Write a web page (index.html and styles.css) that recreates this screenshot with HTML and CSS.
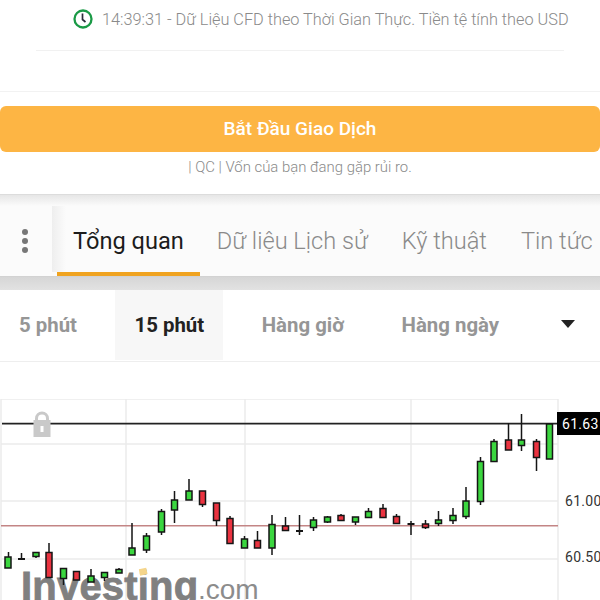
FILE: index.html
```html
<!DOCTYPE html>
<html>
<head>
  <meta charset="utf-8">
  <title>Investing - Tổng quan</title>
  <link rel="stylesheet" href="styles.css">
</head>
<body>
  <div class="status">
    <div class="status-line">
      <svg class="clock" width="20" height="20" viewBox="0 0 20 20">
        <circle cx="10" cy="10" r="8.5" fill="none" stroke="#1a9a46" stroke-width="2.3"/>
        <path d="M9.5 4.5V10.5L12.5 13" fill="none" stroke="#2b2b3a" stroke-width="1.7"/>
      </svg>
      <span class="status-text">14:39:31 - Dữ Liệu CFD theo Thời Gian Thực. Tiền tệ tính theo USD</span>
    </div>
    <div class="status-rule"></div>
  </div>

  <div class="promo">
    <a class="trade-btn">Bắt Đầu Giao Dịch</a>
    <p class="risk">| QC | Vốn của bạn đang gặp rủi ro.</p>
  </div>

  <div class="tabs-gap"></div>

  <div class="tabs">
    <div class="tabs-menu">
      <span class="dot"></span>
      <span class="dot"></span>
      <span class="dot"></span>
    </div>
    <div class="tab tab-active">Tổng quan</div>
    <div class="tab">Dữ liệu Lịch sử</div>
    <div class="tab">Kỹ thuật</div>
    <div class="tab">Tin tức</div>
  </div>
  <div class="tabs-band"></div>

  <div class="ranges">
    <div class="range">5 phút</div>
    <div class="range range-active">15 phút</div>
    <div class="range">Hàng giờ</div>
    <div class="range">Hàng ngày</div>
    <div class="range-arrow"></div>
  </div>

  <svg class="chart" width="600" height="201" viewBox="0 399 600 201">
    <!-- grid -->
    <path class="grid" d="M1 399H558M1 444H558M1 501H558M1 559H558M1 399V600M126 399V600M245 399V600M411 399V600M558 399V600"/>
    <path class="line-close" d="M1 525.7H558"/>
    <path class="line-last" d="M2 423.7H558"/>

    <!-- lock -->
    <path d="M36.5 420V418.5a5.5 5.5 0 0 1 11 0V420" fill="none" stroke="#c9c9c9" stroke-width="3"/>
    <path d="M33.5 420H50.5V437H33.5ZM40.5 426V432H43.5V426Z" fill="#c9c9c9" fill-rule="evenodd"/>

    <!-- watermark -->
    <text class="logo-main" x="21" y="600">Investing</text>
    <text class="logo-com" x="198" y="599">.com</text>
    <rect x="139.5" y="568.5" width="7.5" height="6.5" fill="#f5d58b" transform="rotate(-12 143 572)"/>

    <!-- candles: wick then body -->
    <g class="wicks">
      <path d="M8.5 552V568M21.5 553V560M36 552V558M49 543V578M63.5 568V585M91 569V582M104.5 572V581M119 568V573"/>
      <path d="M132 523V555M146.5 533V553M161.5 509V535M174.5 491V523M189 479V500M202.5 491V507M216.5 503V526M230 516V544"/>
      <path d="M244.5 536V548M257.5 531V548M272 515V555M285.5 517V531M299.5 515V535M313.5 517V531M327.5 516V523M341 514V520"/>
      <path d="M355.5 517V525M368.5 508V518M383 504V518M396.5 514V523M411 521V535M425.5 520V529M438.5 511V526M453 508V524"/>
      <path d="M466 487V519M480.5 457V505M494 439V462M508.5 423V450M521.5 414V451M536.5 439V471M549.5 424V459"/>
    </g>
    <g class="up">
      <rect x="5" y="557" width="6" height="11"/>
      <rect x="33" y="552.5" width="6" height="4"/>
      <rect x="60.5" y="568.5" width="6" height="10"/>
      <rect x="88" y="576" width="6" height="6"/>
      <rect x="101.5" y="572.5" width="6" height="5"/>
      <rect x="116" y="569.5" width="6" height="3.5"/>
      <rect x="129" y="548" width="6" height="7"/>
      <rect x="143.5" y="536" width="6" height="14"/>
      <rect x="158.5" y="511.5" width="6" height="20.5"/>
      <rect x="171.5" y="500" width="6" height="10"/>
      <rect x="186" y="491" width="6" height="9"/>
      <rect x="241.5" y="539" width="6" height="9"/>
      <rect x="269" y="524.5" width="6" height="23.5"/>
      <rect x="310.5" y="520" width="6" height="7.5"/>
      <rect x="324.5" y="517" width="6" height="5"/>
      <rect x="352.5" y="517" width="6" height="5"/>
      <rect x="365.5" y="511.5" width="6" height="6"/>
      <rect x="435.5" y="520" width="6" height="3.5"/>
      <rect x="450" y="515.5" width="6" height="5"/>
      <rect x="463" y="501" width="6" height="15.5"/>
      <rect x="477.5" y="461.5" width="6" height="40"/>
      <rect x="491" y="441.5" width="6" height="20"/>
      <rect x="518.5" y="440" width="6" height="5.5"/>
      <rect x="546.5" y="424" width="6" height="35"/>
    </g>
    <g class="down">
      <rect x="46" y="552.5" width="6" height="25"/>
      <rect x="73.5" y="571.5" width="6" height="8.5"/>
      <rect x="199.5" y="491" width="6" height="13.5"/>
      <rect x="213.5" y="503" width="6" height="17.5"/>
      <rect x="227" y="518.5" width="6" height="25"/>
      <rect x="254.5" y="540.5" width="6" height="7.5"/>
      <rect x="282.5" y="526" width="6" height="4.5"/>
      <rect x="338" y="515.5" width="6" height="5"/>
      <rect x="380" y="508.5" width="6" height="9"/>
      <rect x="393.5" y="516.5" width="6" height="7"/>
      <rect x="422.5" y="524" width="6" height="3.5"/>
      <rect x="505.5" y="440" width="6" height="10"/>
      <rect x="533.5" y="441.5" width="6" height="16"/>
    </g>
    <path class="doji" d="M18 559H25M296 531H303M407.5 524H414.5"/>

    <!-- price axis -->
    <rect x="557" y="412" width="43" height="23" fill="#000"/>
    <text class="price price-last" x="562" y="429">61.63</text>
    <text class="price" x="565" y="506">61.00</text>
    <text class="price" x="565" y="562">60.50</text>
  </svg>
</body>
</html>
```

FILE: styles.css
```css
html, body {
    margin: 0;
    padding: 0;
}

body {
    width: 600px;
    height: 600px;
    overflow: hidden;
    background-color: #fff;
    font-family: Roboto, "Liberation Sans", sans-serif;
}

.status {
    height: 92px;
    box-sizing: border-box;
    padding: 9px 36px 0;
    border-bottom: 1px solid #f2f2f2;
}

.status-line {
    display: flex;
    align-items: center;
    height: 20px;
    padding-left: 37px;
    gap: 9px;
}

.clock {
    flex: none;
}

.status-text {
    font-size: 16.3px;
    font-weight: 300;
    color: #8a8a8a;
    white-space: nowrap;
}

.status-rule {
    height: 1px;
    margin-top: 21px;
    background-color: #f1f1f1;
}

.promo {
    height: 103px;
    box-sizing: border-box;
    padding-top: 14px;
    border-bottom: 1px solid #dcdcdc;
}

.trade-btn {
    display: block;
    height: 46px;
    line-height: 46px;
    border-radius: 6px;
    background-color: #fdb544;
    color: #fff;
    font-size: 19px;
    font-weight: 500;
    text-align: center;
}

.risk {
    margin: 6px 0 0;
    font-size: 14.9px;
    font-weight: 300;
    line-height: 18px;
    color: #8a8a8a;
    text-align: center;
}

.tabs-gap {
    height: 11px;
    background: linear-gradient(#e6e6e6, #fbfbfb);
}

.tabs {
    display: flex;
    height: 71px;
    background-color: #fbfbfb;
    border-bottom: 1px solid #d2d2d2;
    box-sizing: border-box;
    white-space: nowrap;
}

.tabs-menu {
    position: relative;
    display: flex;
    flex-direction: column;
    align-items: center;
    justify-content: center;
    gap: 3px;
    flex: none;
    width: 50px;
    height: 70px;
    margin-right: 7px;
}

.tabs-menu::after {
    content: "";
    position: absolute;
    top: 0;
    left: 52px;
    width: 14px;
    height: 66px;
    background: linear-gradient(to right, #eeeeee, #fbfbfb);
}

.dot {
    width: 6px;
    height: 6px;
    border-radius: 50%;
    background-color: #777;
}

.tab {
    position: relative;
    flex: none;
    padding: 0 17px;
    line-height: 71px;
    font-size: 23.6px;
    font-weight: 300;
    color: #8a8a8a;
}

.tab-active {
    padding: 0 16px;
    height: 70px;
    box-sizing: border-box;
    border-bottom: 4px solid #f0a31f;
    font-size: 23.6px;
    color: #1c1c1c;
    font-weight: 400;
}

.tabs-band {
    height: 13px;
    background: linear-gradient(#d6d6d6, #e2e2e2);
}

.ranges {
    display: flex;
    align-items: stretch;
    gap: 19.5px;
    height: 72px;
    box-sizing: border-box;
    border-bottom: 1px solid #eee;
    padding-bottom: 1px;
    font-size: 20.4px;
    font-weight: 700;
    color: #969696;
    white-space: nowrap;
}

.range {
    padding: 0 19px;
    line-height: 70px;
}

.range-active {
    background-color: #f7f7f7;
    color: #222;
}

.range-arrow {
    width: 0;
    height: 0;
    margin: 30px 0 0 23px;
    border-left: 7.5px solid transparent;
    border-right: 7.5px solid transparent;
    border-top: 8px solid #222;
}

.chart {
    display: block;
    margin-top: 37px;
}

.grid {
    fill: none;
    stroke: #ebebeb;
    stroke-width: 1.5;
}

.line-close {
    fill: none;
    stroke: #c38585;
    stroke-width: 1.6;
}

.line-last {
    fill: none;
    stroke: #222;
    stroke-width: 1.8;
}

.wicks path,
.doji {
    fill: none;
    stroke: #151515;
    stroke-width: 1.5;
}

.doji {
    stroke-width: 2;
}

.up rect,
.down rect {
    stroke: #151515;
    stroke-width: 1.5;
}

.up rect {
    fill: #3bd63f;
}

.down rect {
    fill: #ea3340;
}

.price {
    font-family: Roboto, "Liberation Sans", sans-serif;
    font-size: 14px;
    letter-spacing: 0.3px;
    fill: #333;
}

.price-last {
    fill: #fff;
}

.logo-main {
    font-family: "Liberation Sans", sans-serif;
    font-size: 40px;
    font-weight: 700;
    letter-spacing: 0.2px;
    fill: #808080;
    stroke: #808080;
    stroke-width: 0.8;
}

.logo-com {
    font-family: "Liberation Sans", sans-serif;
    font-size: 28px;
    fill: #8c8c8c;
}
```
